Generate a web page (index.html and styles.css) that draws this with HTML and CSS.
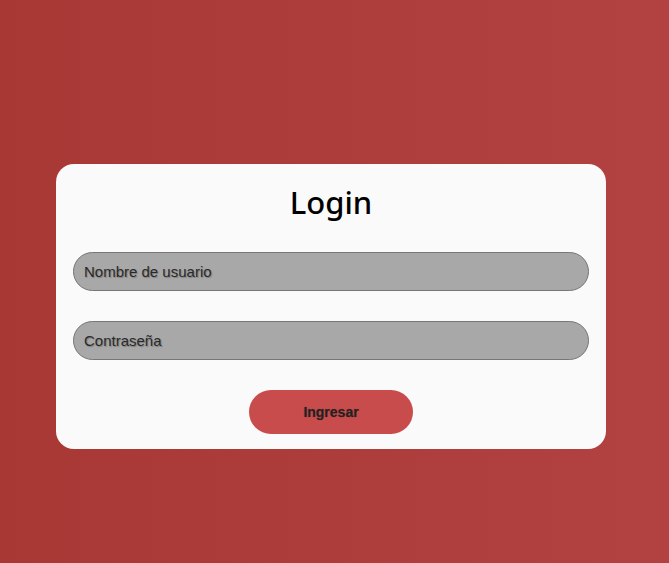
FILE: index.html
```html
<!DOCTYPE html>
<html lang="es">
<head>
<meta charset="utf-8">
<title>Login</title>
<link rel="stylesheet" href="styles.css">
</head>
<body>
<main class="page">
  <form class="card">
    <h1 class="title">Login</h1>
    <input class="field" type="text" placeholder="Nombre de usuario">
    <input class="field" type="password" placeholder="Contraseña">
    <button class="btn" type="button">Ingresar</button>
  </form>
</main>
</body>
</html>
```
FILE: styles.css
```css
html, body {
  margin: 0;
  padding: 0;
  height: 100%;
}
body {
  background: linear-gradient(90deg, #a83834 0%, #b24242 100%);
  font-family: "Liberation Sans", Arial, sans-serif;
}
.page {
  height: 100%;
  display: flex;
  align-items: center;
  justify-content: center;
  padding: 50px 7px 0 0;
  box-sizing: border-box;
}
.card {
  width: 550px;
  box-sizing: border-box;
  background: #fafafa;
  border-radius: 18px;
  padding: 19px 17px 15px;
  display: flex;
  flex-direction: column;
  align-items: center;
}
.title {
  margin: 0;
  font-family: "Noto Sans", sans-serif;
  font-weight: 500;
  font-size: 31px;
  line-height: 39px;
  color: #000;
}
.field {
  width: 100%;
  box-sizing: border-box;
  height: 39px;
  border: 1px solid #767676;
  border-radius: 20px;
  background: #a8a8a8;
  padding: 0 10px;
  font-family: "Liberation Sans", Arial, sans-serif;
  font-size: 15px;
  color: #222;
  margin-top: 30px;
  text-shadow: 1px 1px 1px rgba(0,0,0,0.25);
}
.field::placeholder {
  color: #2a2a2a;
  opacity: 1;
}
.btn {
  margin-top: 30px;
  width: 164px;
  height: 44px;
  border: none;
  border-radius: 22px;
  background: #c84c4c;
  font-family: "Liberation Sans", Arial, sans-serif;
  font-weight: bold;
  font-size: 14px;
  color: #222;
  text-shadow: 0 0 1px rgba(0,0,0,0.3);
}
```
